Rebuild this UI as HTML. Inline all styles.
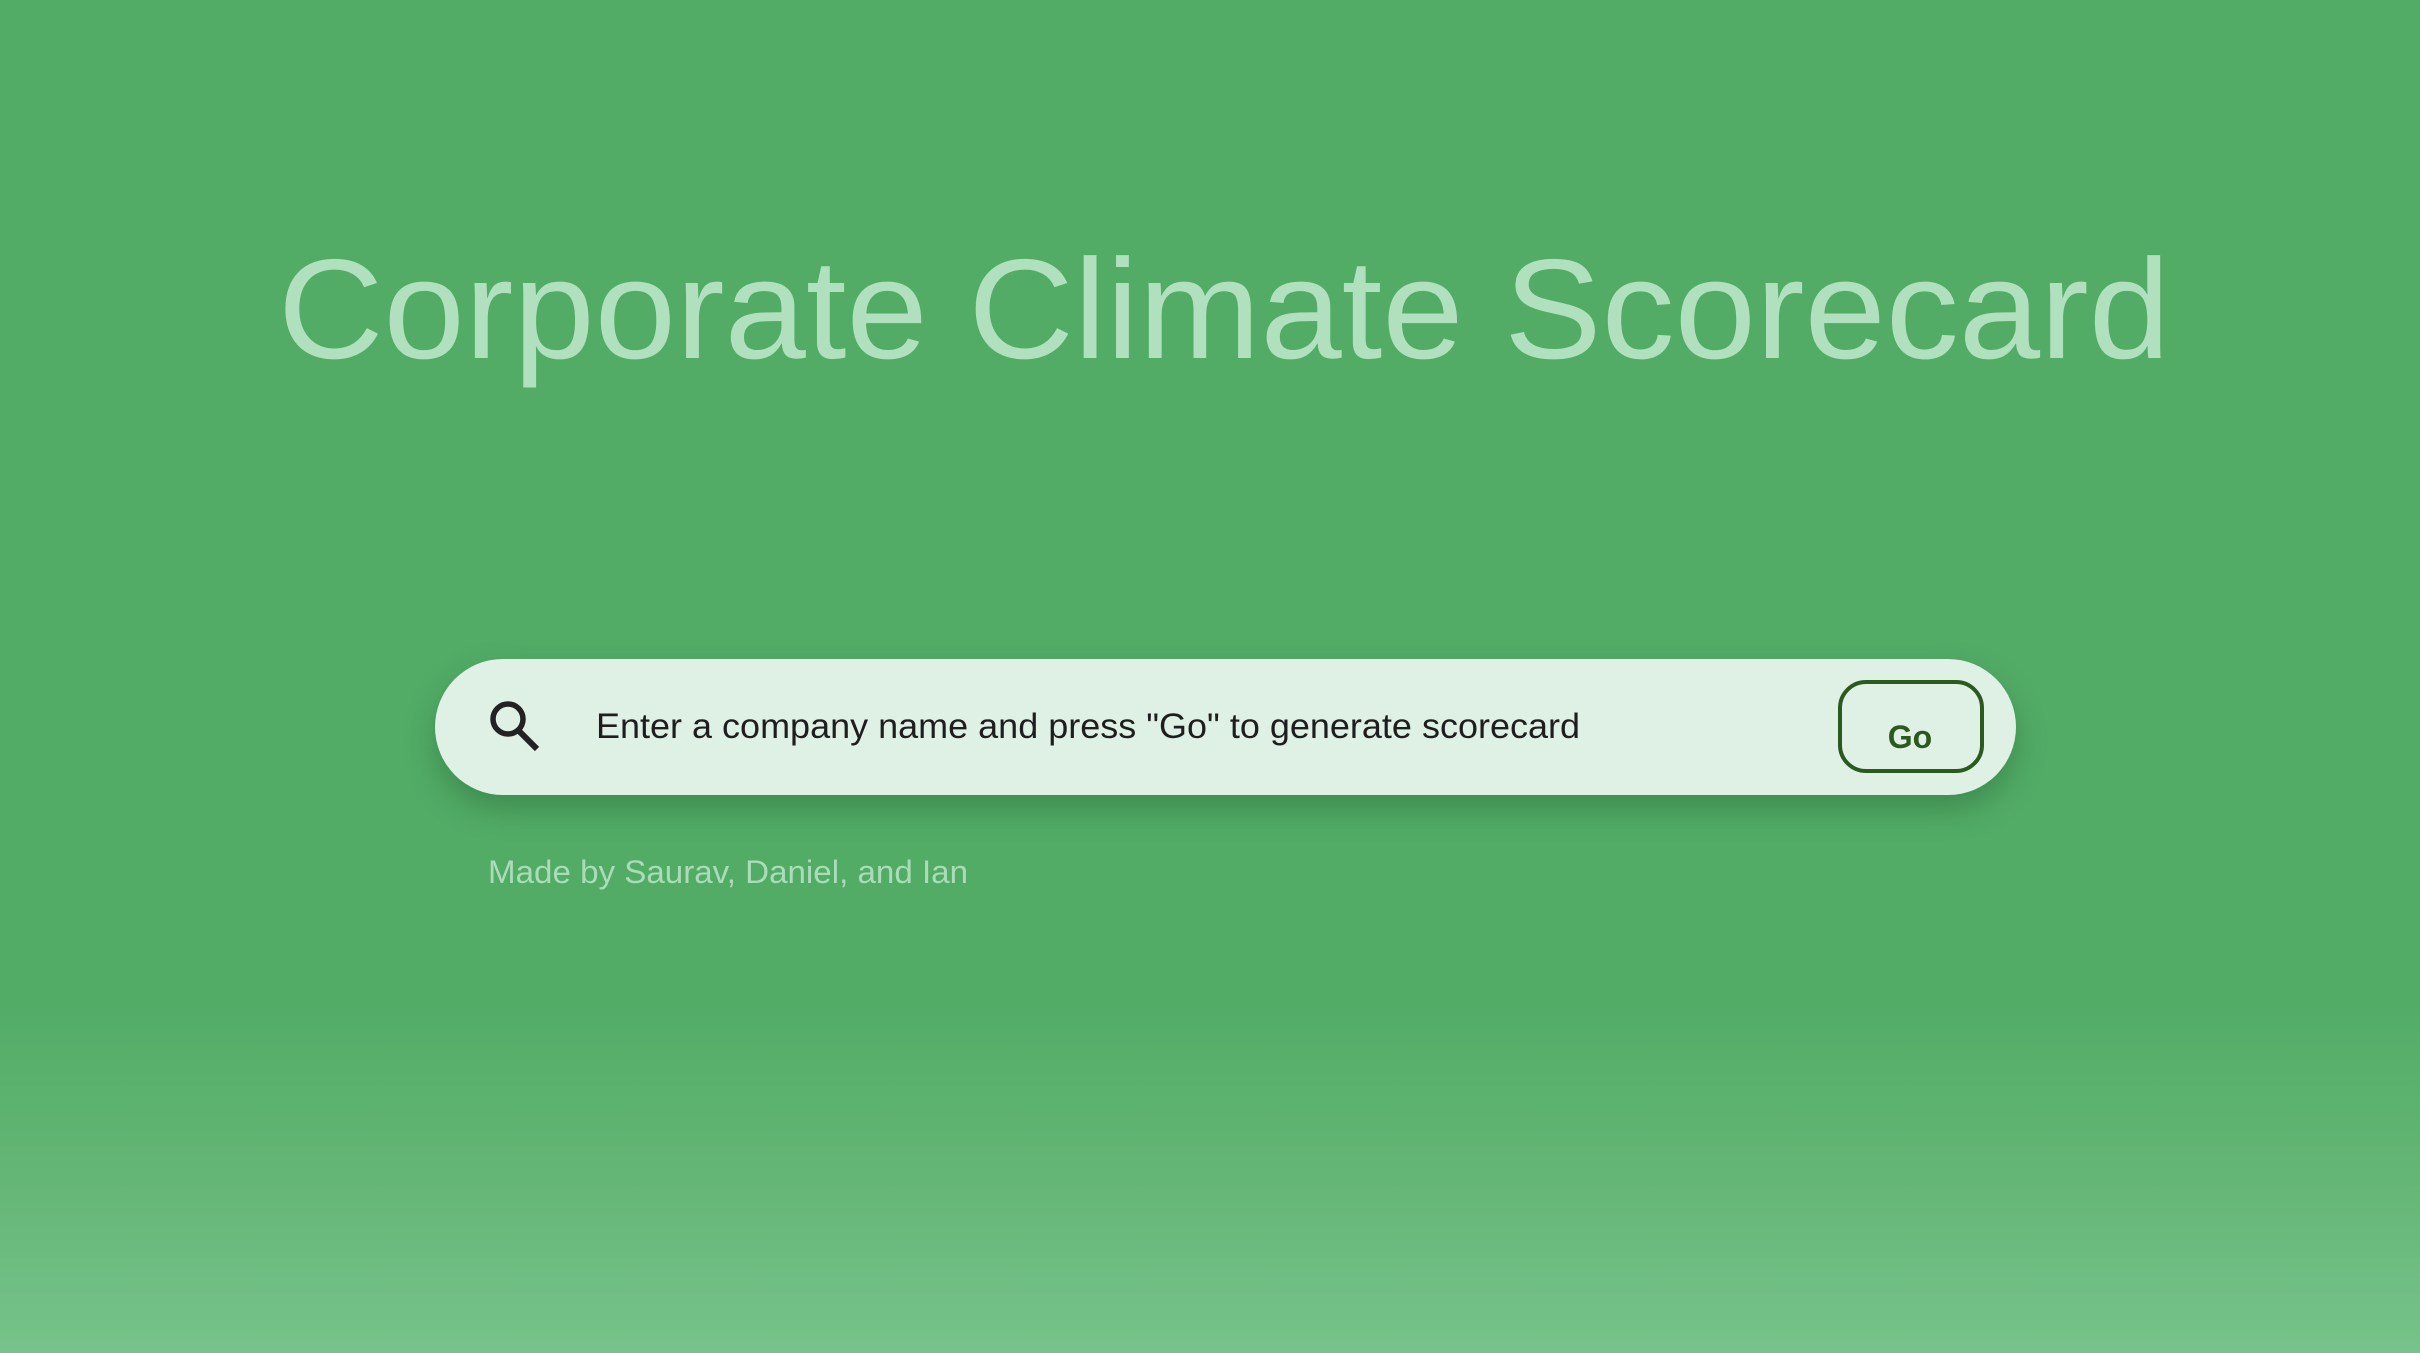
<!DOCTYPE html>
<html><head><meta charset="utf-8"><style>
html,body{margin:0;padding:0}
body{width:2420px;height:1353px;overflow:hidden;position:relative;
background:linear-gradient(to bottom,#52ac66 0px,#52ac66 1000px,#64b676 1180px,#77c38b 1353px);
font-family:"Liberation Sans",sans-serif}
.bar{position:absolute;left:435px;top:659px;width:1581px;height:136px;border-radius:68px;background:#dff0e4;
box-shadow:0 14px 30px rgba(30,80,40,.35)}
.go{position:absolute;left:1838px;top:680px;width:138px;height:85px;border:4px solid #2b5a1e;border-radius:28px;}
svg{position:absolute;left:0;top:0}
</style></head><body>
<div class="bar"></div>
<div class="go"></div>
<svg width="2420" height="1353" xmlns="http://www.w3.org/2000/svg">
<text x="278" y="358" font-family="Liberation Sans, sans-serif" font-size="142" fill="#b0e0bd" textLength="1892" lengthAdjust="spacingAndGlyphs">Corporate Climate Scorecard</text>
<circle cx="508" cy="719" r="15" fill="none" stroke="#222" stroke-width="5.5"/>
<line x1="518" y1="730" x2="537" y2="749" stroke="#222" stroke-width="6"/>
<text x="596" y="738" font-family="Liberation Sans, sans-serif" font-size="35" fill="#1e1e1e" textLength="984" lengthAdjust="spacingAndGlyphs">Enter a company name and press "Go" to generate scorecard</text>
<text x="1910" y="748" text-anchor="middle" font-family="Liberation Sans, sans-serif" font-weight="bold" font-size="32" fill="#2b5a1e">Go</text>
<text x="488" y="883" font-family="Liberation Sans, sans-serif" font-size="32" fill="#a9dcb7" textLength="480" lengthAdjust="spacingAndGlyphs">Made by Saurav, Daniel, and Ian</text>
</svg>
</body></html>
